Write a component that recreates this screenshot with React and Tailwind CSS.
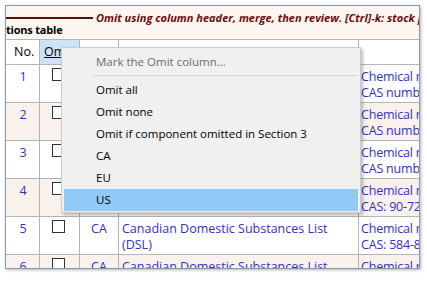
import React from "react";

const rows = [
  { no: 1, region: "CA", name: "Canadian Domestic Substances List (DSL)", info: ["Chemical name", "CAS number"] },
  { no: 2, region: "EU", name: "European Inventory (EINECS)", info: ["Chemical name", "CAS number"] },
  { no: 3, region: "US", name: "TSCA Inventory", info: ["Chemical name", "CAS number"] },
  { no: 4, region: "CA", name: "Canadian Domestic Substances List (DSL)", info: ["Chemical name", "CAS: 90-72-2"] },
  { no: 5, region: "CA", name: "Canadian Domestic Substances List (DSL)", info: ["Chemical name", "CAS: 584-84-9"] },
  { no: 6, region: "CA", name: "Canadian Domestic Substances List (DSL)", info: ["Chemical name", "CAS: 108-88-3"] },
];

const menuItems = ["Omit all", "Omit none", "Omit if component omitted in Section 3", "CA", "EU"];

function Row({ r }) {
  const bg = r.no % 2 === 0 ? "bg-[#f9f2ec]" : "bg-white";
  return (
    <div className={`flex h-[38px] shrink-0 border-b border-[#b4b4b4] ${bg} text-[#3232c4] text-[12.5px] leading-[16px]`}>
      <div className="w-[34px] shrink-0 border-r border-[#b4b4b4] pt-[4px] text-center pl-[1px]">{r.no}</div>
      <div className="w-[40px] shrink-0 border-r border-[#b4b4b4] pt-[3px] pl-[12px]">
        <div className="w-[13px] h-[13px] border border-[#333] bg-white" />
      </div>
      <div className="w-[39px] shrink-0 border-r border-[#b4b4b4] pt-[4px] text-center">{r.region}</div>
      <div className="w-[240px] shrink-0 border-r border-[#b4b4b4] pt-[4px] pl-[3px] pr-[4px]">{r.name}</div>
      <div className="flex-1 pt-[4px] pl-[2px] whitespace-nowrap tracking-[-0.2px]">
        {r.info.map((t) => (
          <div key={t}>{t}</div>
        ))}
      </div>
    </div>
  );
}

export default function App() {
  return (
    <div className="w-[427px] h-[286px] bg-white pt-[5px] pl-[5px] font-['Segoe_UI','Open_Sans',sans-serif] text-[12px] text-black">
      <div className="relative w-[415px] h-[264px] border border-[#8a98ad] shadow-[1px_1px_3px_rgba(0,0,0,0.3)] overflow-hidden flex flex-col">
        <div className="h-[33px] shrink-0 bg-[#fcf6f1] pt-[6px] leading-[12px]">
          <div className="flex items-center whitespace-nowrap">
            <div className="w-[87px] h-[2px] bg-[#5c0a0a] shrink-0" />
            <span className="ml-[3px] font-bold italic text-[11px] text-[#6e0b0b]">
              Omit using column header, merge, then review. [Ctrl]-k: stock phrases
            </span>
          </div>
          <div className="font-bold text-[11px] tracking-[-0.2px] whitespace-nowrap">tions table</div>
        </div>

        <div className="flex h-[26px] shrink-0 border-y border-[#b4b4b4] bg-white items-center text-[12.5px]">
          <div className="w-[34px] h-full shrink-0 border-r border-[#b4b4b4] pl-[8px] flex items-center">No.</div>
          <div className="w-[40px] h-full shrink-0 border-r border-[#b4b4b4] bg-[#cce4f7] pl-[4px] flex items-center">
            <span className="underline">Omit</span>
          </div>
          <div className="w-[39px] h-full shrink-0 border-r border-[#b4b4b4]" />
          <div className="w-[240px] h-full shrink-0 border-r border-[#b4b4b4]" />
          <div className="flex-1" />
        </div>

        {rows.map((r) => (
          <Row key={r.no} r={r} />
        ))}

        <div className="absolute left-[55px] top-[41px] w-[300px] border border-[#cccccc] bg-[#f0f0f0] px-[2px] pt-[3px] pb-[1px] text-[11.5px] shadow-[2px_2px_3px_rgba(0,0,0,0.25)]">
          <div className="h-[22px] pl-[32px] flex items-center text-[#6d6d6d]">Mark the Omit column...</div>
          <div className="h-[6px] pt-[2px] pl-[28px]">
            <div className="h-px bg-[#d7d7d7]" />
          </div>
          {menuItems.map((m) => (
            <div key={m} className="h-[22px] pl-[32px] flex items-center">{m}</div>
          ))}
          <div className="h-[22px] pl-[32px] flex items-center bg-[#91c9f7]">US</div>
        </div>
      </div>
    </div>
  );
}
